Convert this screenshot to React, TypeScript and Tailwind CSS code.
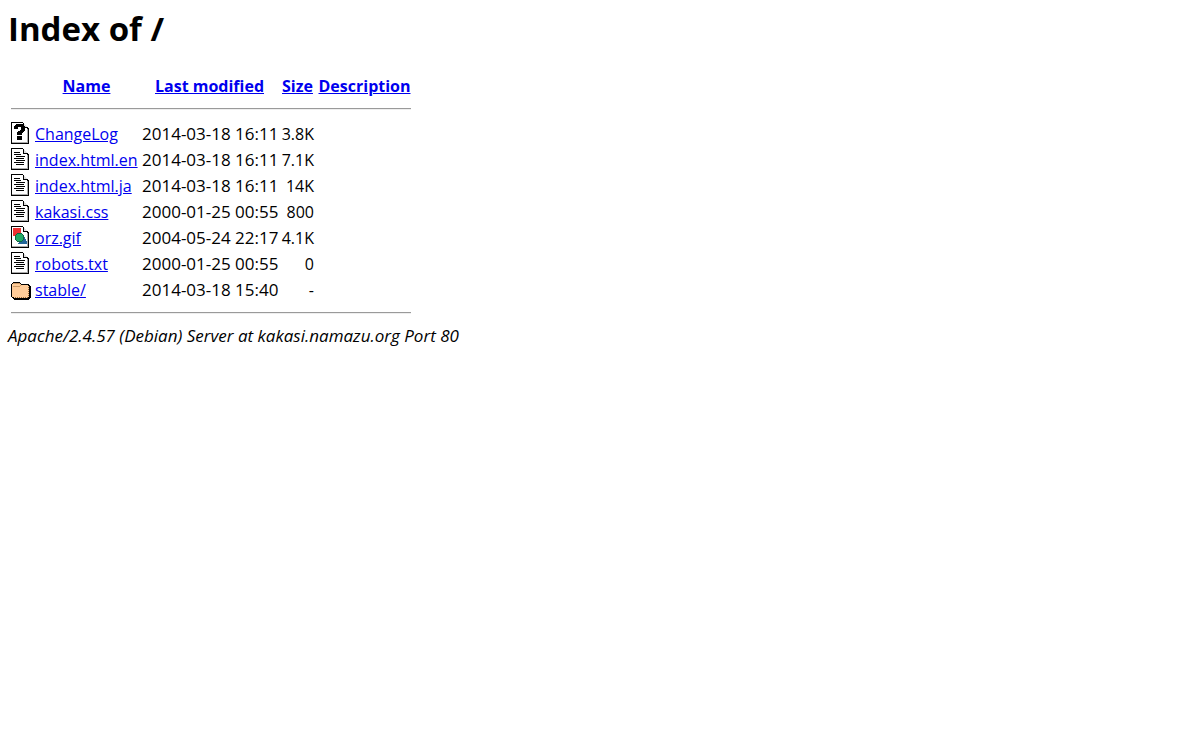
import React from 'react';

type IconType = 'unknown' | 'text' | 'image' | 'folder';

interface FileEntry {
  name: string;
  icon: IconType;
  modified: string;
  size: string;
}

const files: FileEntry[] = [
  { name: 'ChangeLog', icon: 'unknown', modified: '2014-03-18 16:11', size: '3.8K' },
  { name: 'index.html.en', icon: 'text', modified: '2014-03-18 16:11', size: '7.1K' },
  { name: 'index.html.ja', icon: 'text', modified: '2014-03-18 16:11', size: '14K' },
  { name: 'kakasi.css', icon: 'text', modified: '2000-01-25 00:55', size: '800' },
  { name: 'orz.gif', icon: 'image', modified: '2004-05-24 22:17', size: '4.1K' },
  { name: 'robots.txt', icon: 'text', modified: '2000-01-25 00:55', size: '0' },
  { name: 'stable/', icon: 'folder', modified: '2014-03-18 15:40', size: '-' },
];

// sheet of paper with a folded corner, shared by the file icons
const Paper = () => (
  <>
    <path d="M0 0h12v1h1v1h1v1h1v1h1v1h1v1h1v16H0z" fill="#000" />
    <path d="M1 1h11v5h4v14H1z" fill="#fff" />
    <path d="M13 2h1v1h1v1h1v1h-3z" fill="#ddd" />
    <path d="M1 20h15v1H1zM16 7h1v14h-1z" fill="#aaa" />
  </>
);

const FileIcon = ({ type }: { type: IconType }) => (
  <svg width="20" height="22" viewBox="0 0 20 22" shapeRendering="crispEdges" className="block" aria-hidden="true">
    {type !== 'folder' && <Paper />}
    {type === 'unknown' && (
      <path
        d="M5 2h7v1h1v1h1v5h-1v1h-1v1h-1v2H6v-3h1V9h2V8h1V5H7v2H3V4h1V3h1zM6 14h5v4H6z"
        fill="#000"
      />
    )}
    {type === 'text' && (
      <path
        d="M3 4h6v1H3zM3 6h7v1H3zM5 8h9v1H5zM3 10h10v1H3zM5 12h9v1H5zM3 14h10v1H3zM5 16h8v1H5z"
        fill="#000"
      />
    )}
    {type === 'image' && (
      <>
        <path d="M2 2h8v8H2z" fill="#e33" />
        <path d="M12 9h1v2h1v2h1v2h1v3H7v-1h1v-2h2v-3h1v-2h1z" fill="#269" />
        <path d="M6 7h5v1h1v1h1v5h-1v1h-1v1H6v-1H5v-1H4V9h1V8h1z" fill="#164" />
        <path d="M6 8h5v1h1v5h-1v1H6v-1H5V9h1z" fill="#2a6" />
      </>
    )}
    {type === 'folder' && (
      <>
        <path d="M2 4h7v1h1v1h8v1h1v1h1v12h-1v1h-1v1H3v-1H2v-1H1v-1H0V6h1V5h1z" fill="#000" />
        <path d="M2 5h7v1h1v1h7v1h1v11h-1v1H3v-1H1V6h1z" fill="#fc9" />
        <path d="M2 5h7v1H2zM2 8h7v1H2zM9 7h1v1H9z" fill="#c96" />
        <path
          d="M17 9h1v1h-1zM17 11h1v1h-1zM17 13h1v1h-1zM17 15h1v1h-1zM17 17h1v1h-1zM4 19h1v1H4zM6 19h1v1H6zM8 19h1v1H8zM10 19h1v1h-1zM12 19h1v1h-1zM14 19h1v1h-1zM16 19h1v1h-1z"
          fill="#963"
        />
      </>
    )}
  </svg>
);

const Rule = () => (
  <tr>
    <td colSpan={5} className="p-px">
      <hr className="my-2 border-t border-b border-t-[#9a9a9a] border-b-[#eee]" />
    </td>
  </tr>
);

const App = () => {
  return (
    <main className="p-2 bg-white text-black text-base font-['Open_Sans','Noto_Sans',sans-serif]">
      <h1 className="mb-[21px] text-[33px] leading-[42px] font-bold">Index of /</h1>
      <table className="table-fixed w-[406px] border-separate border-spacing-[2px] leading-[22px] whitespace-nowrap">
        <colgroup>
          <col className="w-[22px]" />
          <col className="w-[105px]" />
          <col className="w-[137px]" />
          <col className="w-[35px]" />
          <col className="w-[95px]" />
        </colgroup>
        <tbody>
          <tr>
            <th className="p-px"></th>
            <th className="px-px pt-0.5"><a href="?C=N;O=D" className="text-[#0000ee] underline">Name</a></th>
            <th className="px-px pt-0.5"><a href="?C=M;O=A" className="text-[#0000ee] underline">Last modified</a></th>
            <th className="px-px pt-0.5"><a href="?C=S;O=A" className="text-[#0000ee] underline">Size</a></th>
            <th className="px-px pt-0.5"><a href="?C=D;O=A" className="text-[#0000ee] underline">Description</a></th>
          </tr>
          <Rule />
          {files.map((file) => (
            <tr key={file.name}>
              <td className="p-px"><FileIcon type={file.icon} /></td>
              <td className="px-px pt-0.5">
                <a href={file.name} className="text-[#0000ee] underline">{file.name}</a>
              </td>
              <td className="px-px pt-0.5 text-[17px]">{file.modified}</td>
              <td className="px-px pt-0.5 text-right">{file.size}</td>
              <td className="p-px"></td>
            </tr>
          ))}
          <Rule />
        </tbody>
      </table>
      <address className="text-[17px] italic leading-[22px]">Apache/2.4.57 (Debian) Server at kakasi.namazu.org Port 80</address>
    </main>
  );
};

export default App;
